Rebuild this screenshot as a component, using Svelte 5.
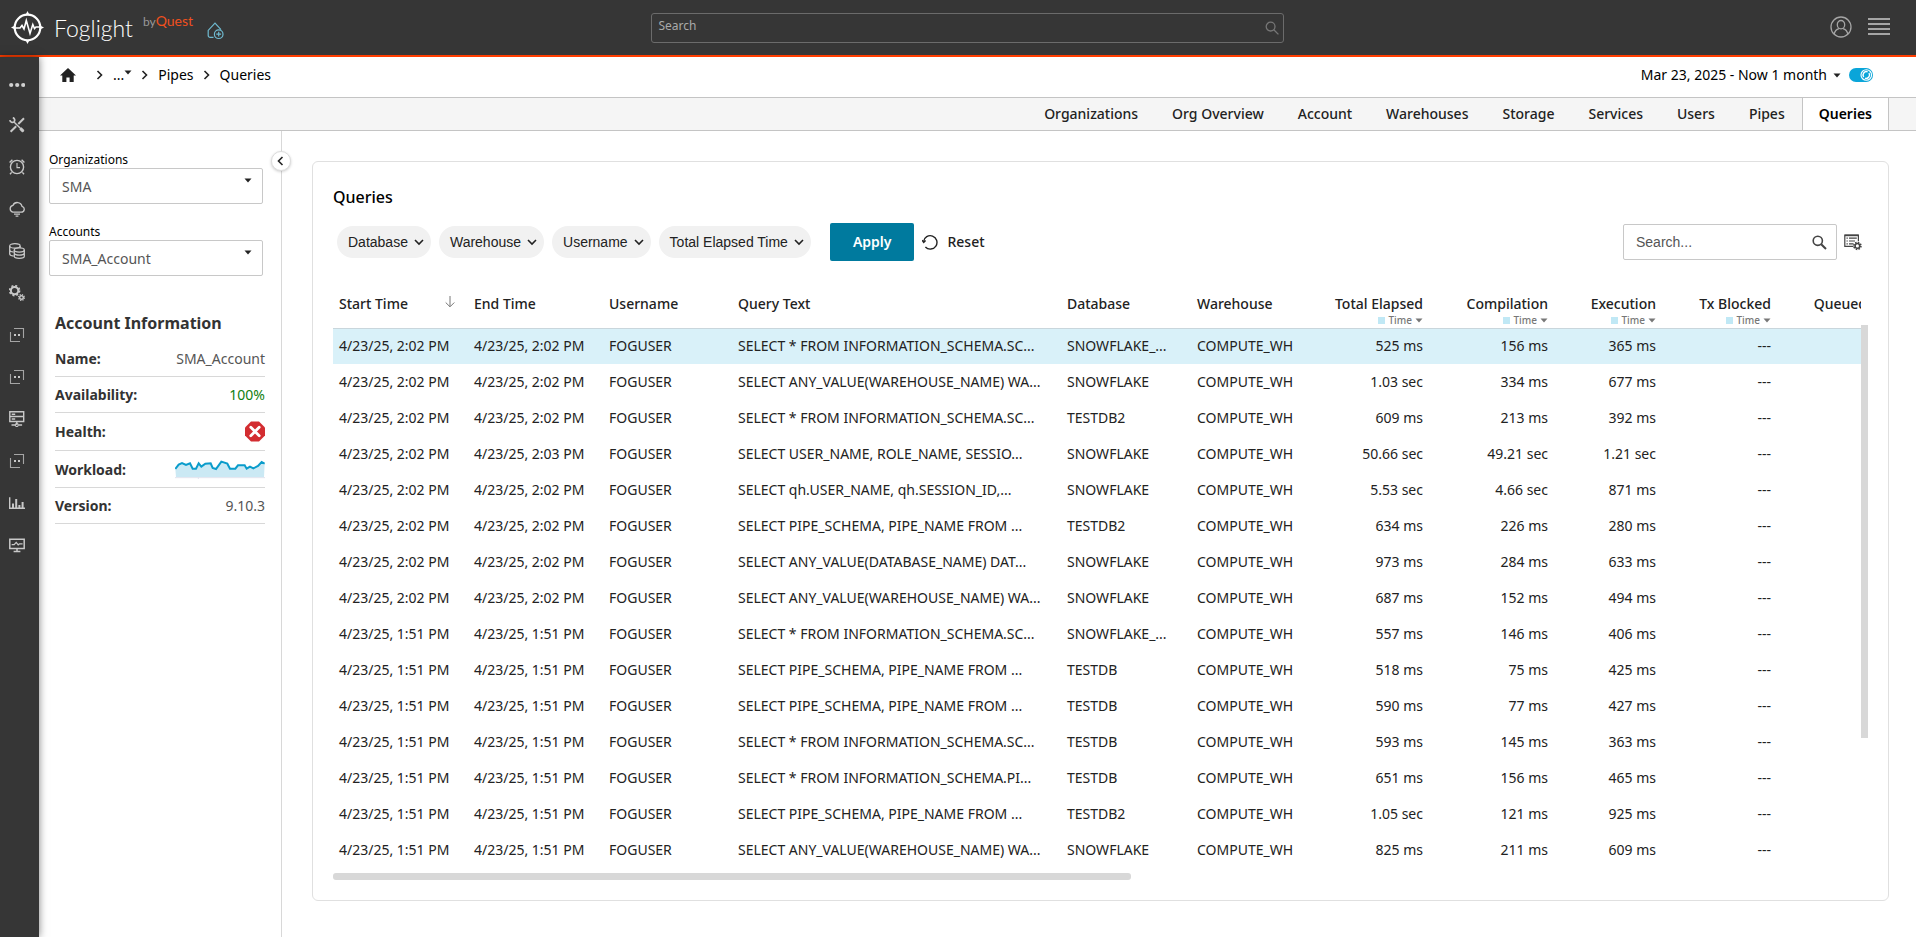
<script>
  const domainIcon = '<path d="M5 1.5h9.5v9.5M1.5 5v9.5H11" stroke="#a5a5a5"/><path d="M5 8h2M9 8h2" stroke-width="2"/>'

  const navItems = [
    { name: 'More', icon: '<g fill="#d0d0d0" stroke="none"><circle cx="2.2" cy="10" r="2.1"/><circle cx="8.2" cy="10" r="2.1"/><circle cx="14.2" cy="10" r="2.1"/></g>' },
    { name: 'Tools', icon: '<path d="M15 1.2L9.3 7M7.2 9.3L1.6 14.8" stroke-width="2"/><path d="M5 5l9.6 9.6" stroke-width="1.4"/><path d="M11.4 11.4l3 3" stroke-width="3"/><path d="M.8 3.2a2.6 2.6 0 0 0 4.4 1.4A2.6 2.6 0 0 0 3.8.6" stroke-width="1.7"/>' },
    { name: 'Alarms', icon: '<circle cx="8" cy="8" r="6.6" stroke-width="1.4"/><path d="M8 4v4.6h3"/><path d="M.6 3.6L3.4.8M15.4 3.6L12.6.8M2.6 13.4L1 15.3M13.4 13.4l1.6 1.9" stroke-width="1.4"/>' },
    { name: 'Cloud', icon: '<path d="M3.8 11.2h8.4a3 3 0 0 0 .8-5.9 4.8 4.8 0 0 0-9.1-.9A3.5 3.5 0 0 0 3.8 11.2z" stroke-width="1.3"/><path d="M5 13.2h6M6.6 15.2h2.8" stroke-width="1.3"/>' },
    { name: 'Databases', icon: '<g stroke-width="1.3"><ellipse cx="5.9" cy="2.9" rx="5.2" ry="2.2"/><path d="M.7 2.9v8.2c0 1 1.6 1.8 4 2.1M11.1 2.9V5M.7 7c0 1 1.6 1.8 4 2.1"/><ellipse cx="10.3" cy="7" rx="5" ry="2.1"/><path d="M5.3 7v6.2c0 2.8 10 2.8 10 0V7M5.3 10.1c0 2.7 10 2.7 10 0"/></g>' },
    { name: 'Administration', icon: '<circle cx="5.6" cy="5.6" r="3.7" stroke-width="2"/><circle cx="5.6" cy="5.6" r="5" stroke-width="1.6" stroke-dasharray="2 1.93"/><circle cx="12.5" cy="12.5" r="1.8" stroke-width="1.4"/><circle cx="12.5" cy="12.5" r="2.9" stroke-width="1.3" stroke-dasharray="1.2 1.08"/>' },
    { name: 'Domain one', icon: domainIcon },
    { name: 'Domain two', icon: domainIcon },
    { name: 'Servers', icon: '<path d="M.8.8h13.9v4.7H.8zM.8 5.5h13.9v5H.8zM7.8 10.5V14M2.5 14h3.6M9.5 14h3.6" stroke-width="1.4"/><path d="M2.7 3.2h3.5M2.7 8h3.5" stroke-width="1.4"/><circle cx="7.8" cy="14" r="1.5"/>' },
    { name: 'Domain three', icon: domainIcon },
    { name: 'Reports', icon: '<path d="M.7 2.2v11.1H16" stroke-width="1.4"/><path d="M4 13V8.4M7.2 13V4M10.4 13V10M13.6 13V7" stroke-width="2"/>' },
    { name: 'Dashboards', icon: '<path d="M.8 2.2h14.4v9.2H.8zM8 11.4v3M4.6 14.4h6.8" stroke-width="1.5"/><path d="M2.6 7.6h2.6l2-2.2 2 2.4 1.4-1h3" stroke-width="1.3"/>' }
  ]

  const tabs = ['Organizations', 'Org Overview', 'Account', 'Warehouses', 'Storage', 'Services', 'Users', 'Pipes', 'Queries']
  const filters = ['Database', 'Warehouse', 'Username', 'Total Elapsed Time']

  const textColumns = ['Start Time', 'End Time', 'Username', 'Query Text', 'Database', 'Warehouse']
  const timeColumns = ['Total Elapsed', 'Compilation', 'Execution', 'Tx Blocked']

  const selectSchema = 'SELECT * FROM INFORMATION_SCHEMA.SC...'
  const selectWarehouse = 'SELECT ANY_VALUE(WAREHOUSE_NAME) WA...'
  const selectPipe = 'SELECT PIPE_SCHEMA, PIPE_NAME FROM ...'

  const rows = [
    ['2:02', '2:02', selectSchema, 'SNOWFLAKE_...', '525 ms', '156 ms', '365 ms'],
    ['2:02', '2:02', selectWarehouse, 'SNOWFLAKE', '1.03 sec', '334 ms', '677 ms'],
    ['2:02', '2:02', selectSchema, 'TESTDB2', '609 ms', '213 ms', '392 ms'],
    ['2:02', '2:03', 'SELECT USER_NAME, ROLE_NAME, SESSIO...', 'SNOWFLAKE', '50.66 sec', '49.21 sec', '1.21 sec'],
    ['2:02', '2:02', 'SELECT qh.USER_NAME, qh.SESSION_ID,...', 'SNOWFLAKE', '5.53 sec', '4.66 sec', '871 ms'],
    ['2:02', '2:02', selectPipe, 'TESTDB2', '634 ms', '226 ms', '280 ms'],
    ['2:02', '2:02', 'SELECT ANY_VALUE(DATABASE_NAME) DAT...', 'SNOWFLAKE', '973 ms', '284 ms', '633 ms'],
    ['2:02', '2:02', selectWarehouse, 'SNOWFLAKE', '687 ms', '152 ms', '494 ms'],
    ['1:51', '1:51', selectSchema, 'SNOWFLAKE_...', '557 ms', '146 ms', '406 ms'],
    ['1:51', '1:51', selectPipe, 'TESTDB', '518 ms', '75 ms', '425 ms'],
    ['1:51', '1:51', selectPipe, 'TESTDB', '590 ms', '77 ms', '427 ms'],
    ['1:51', '1:51', selectSchema, 'TESTDB', '593 ms', '145 ms', '363 ms'],
    ['1:51', '1:51', 'SELECT * FROM INFORMATION_SCHEMA.PI...', 'TESTDB', '651 ms', '156 ms', '465 ms'],
    ['1:51', '1:51', selectPipe, 'TESTDB2', '1.05 sec', '121 ms', '925 ms'],
    ['1:51', '1:51', selectWarehouse, 'SNOWFLAKE', '825 ms', '211 ms', '609 ms']
  ]

  const workload = '1,30 11,17 21,12 33,18 45,13 53,29 63,29 71,13 79,23 91,14 107,13 113,27 123,30 131,19 139,8 157,14 165,29 181,29 189,19 209,19 215,29 225,23 235,28 249,21 260,9 269,14'

  let activeTab = $state('Queries')
  let selectedRow = $state(0)
  let panelOpen = $state(true)
</script>

{#snippet chevron(path)}
  <svg class="chevron" width="10" height="10" viewBox="0 0 10 10"><path d={path} /></svg>
{/snippet}

{#snippet caret()}
  <svg class="caret" width="8" height="5" viewBox="0 0 8 5"><path d="M.5.5h7L4 4.5z" /></svg>
{/snippet}

<div class="app">
  <header>
    <div class="brand">
      <svg width="33" height="33" viewBox="0 0 33 33" fill="none" stroke="#fff">
        <circle cx="16.5" cy="16.5" r="12.8" stroke-width="2.2" />
        <path d="M16.5 0l2 4h-4zM16.5 33l2-4h-4zM0 16.5l4-2v4zM33 16.5l-4-2v4z" fill="#fff" stroke="none" />
        <path d="M4 17h5l2-2.5 2 3.5 2.3-8.5 3.7 13 2.8-9 1.7 4 1.5-1.5h4" stroke-width="1.6" />
      </svg>
      <span class="product">Foglight</span>
      <span class="company"><small>by</small>Quest</span>
      <button class="icon-button" aria-label="Set as home page">
        <svg width="17" height="18" viewBox="0 0 17 18" fill="none" stroke="#6fbad0" stroke-width="1.2">
          <path d="M6.5 15.4H3.2a2 2 0 0 1-2-2V8.4L8 1.2l6 6.4" />
          <circle cx="11.7" cy="12.2" r="4.3" />
          <path d="M11.7 9.8v4.8M9.3 12.2h4.8" />
        </svg>
      </button>
    </div>
    <div class="global-search">
      <input type="text" placeholder="Search" aria-label="Search" />
      <svg width="14" height="14" viewBox="0 0 14 14" fill="none" stroke="#777" stroke-width="1.3">
        <circle cx="5.6" cy="5.6" r="4.4" /><path d="M8.8 8.8l4.6 4.6" />
      </svg>
    </div>
    <div class="account-actions">
      <button class="icon-button" aria-label="User">
        <svg width="22" height="22" viewBox="0 0 22 22" fill="none" stroke="#a5a5a5" stroke-width="1.3">
          <circle cx="11" cy="11" r="10" /><ellipse cx="11" cy="8.7" rx="3.7" ry="4.2" />
          <path d="M4.2 18.2c.6-3.4 2.3-5 4.8-5.6M17.8 18.2c-.6-3.4-2.3-5-4.8-5.6" />
        </svg>
      </button>
      <button class="icon-button" aria-label="Menu">
        <svg width="22" height="18" viewBox="0 0 22 18" fill="#a5a5a5">
          <path d="M0 0h22v2H0zM0 5h22v2H0zM0 10h22v2H0zM0 15h22v2H0z" />
        </svg>
      </button>
    </div>
  </header>

  <div class="body">
    <nav class="side-nav" aria-label="Main">
      {#each navItems as item}
        <button class="nav-item" aria-label={item.name}>
          <svg width="16" height="16" viewBox="0 0 16 16" fill="none" stroke="#c8c8c8" stroke-width="1.1">{@html item.icon}</svg>
        </button>
      {/each}
    </nav>

    <div class="page">
      <div class="crumb-bar">
        <nav class="crumbs" aria-label="Breadcrumb">
          <a class="home" href="#home" aria-label="Home">
            <svg width="16" height="15" viewBox="0 0 16 15" fill="#222">
              <path d="M8 0l8 7.6h-2.3V14H9.6V9.5H6.4V14H2.3V7.6H0z" />
            </svg>
          </a>
          {@render chevron('M2.5 1l4 4-4 4')}
          <button class="more">...{@render caret()}</button>
          {@render chevron('M2.5 1l4 4-4 4')}
          <a href="#pipes">Pipes</a>
          {@render chevron('M2.5 1l4 4-4 4')}
          <a href="#queries">Queries</a>
        </nav>
        <div class="time-range">
          <button>Mar 23, 2025 - Now 1 month {@render caret()}</button>
          <button class="icon-button" role="switch" aria-checked="true" aria-label="Auto refresh">
            <svg width="24" height="14" viewBox="0 0 24 14" fill="none">
              <rect width="24" height="14" rx="7" fill="#0aa5d9" />
              <circle cx="17.3" cy="7" r="5.3" stroke="#fff" stroke-width="1.1" />
              <path d="M18.6 3.8a3.4 3.4 0 0 0-3.9 5.2M16 10.2a3.4 3.4 0 0 0 3.9-5.2" stroke="#fff" stroke-width="1.4" />
            </svg>
          </button>
        </div>
      </div>

      <nav class="tabs" aria-label="Views">
        {#each tabs as tab}
          <button class="tab" class:active={activeTab === tab} onclick={() => (activeTab = tab)}>{tab}</button>
        {/each}
      </nav>

      <div class="content">
        <aside class:closed={!panelOpen}>
          <button class="collapse" aria-label="Toggle panel" onclick={() => (panelOpen = !panelOpen)}>
            {@render chevron('M6.5 1l-4 4 4 4')}
          </button>
          {#if panelOpen}
            <div class="field">
              <label for="organization">Organizations</label>
              <div class="select">
                <select id="organization"><option>SMA</option></select>
                {@render caret()}
              </div>
            </div>
            <div class="field">
              <label for="account">Accounts</label>
              <div class="select">
                <select id="account"><option>SMA_Account</option></select>
                {@render caret()}
              </div>
            </div>

            <section class="info">
              <h2>Account Information</h2>
              <dl>
                <div><dt>Name:</dt><dd>SMA_Account</dd></div>
                <div><dt>Availability:</dt><dd class="good">100%</dd></div>
                <div>
                  <dt>Health:</dt>
                  <dd>
                    <svg width="20" height="21" viewBox="0 0 20 20" role="img" aria-label="Fatal">
                      <path d="M6 0h8l6 6v8l-6 6H6l-6-6V6z" fill="#d32d31" />
                      <path d="M5.8 5.8l8.4 8.4M14.2 5.8l-8.4 8.4" stroke="#fff" stroke-width="2.8" stroke-linecap="round" />
                    </svg>
                  </dd>
                </div>
                <div>
                  <dt>Workload:</dt>
                  <dd>
                    <svg width="90" height="20" viewBox="0 0 270 60" role="img" aria-label="Workload trend">
                      <polygon points="{workload} 267,54 3,54" fill="#cbe9f4" />
                      <path d="M0 56h270M70 54v8" stroke="#dfe3ee" stroke-width="3" />
                      <polyline points={workload} fill="none" stroke="#0a9ccb" stroke-width="6" />
                    </svg>
                  </dd>
                </div>
                <div><dt>Version:</dt><dd>9.10.3</dd></div>
              </dl>
            </section>
          {/if}
        </aside>

        <main>
          <section class="card">
            <h1>Queries</h1>
            <div class="toolbar">
              <div class="filters">
                {#each filters as filter}
                  <button class="pill">{filter}{@render chevron('M1 3l4 4 4-4')}</button>
                {/each}
              </div>
              <button class="apply">Apply</button>
              <button class="reset">
                <svg width="16" height="16" viewBox="0 0 16 16" fill="none" stroke="#222" stroke-width="1.4">
                  <path d="M1.6 7.6A6.7 6.7 0 1 1 3.4 13" /><path d="M0 6.2l1.7 2.2 1.9-1.9" />
                </svg>
                Reset
              </button>
              <div class="table-search">
                <input type="text" placeholder="Search..." aria-label="Search queries" />
                <svg width="15" height="15" viewBox="0 0 15 15" fill="none" stroke="#444" stroke-width="1.6">
                  <circle cx="5.8" cy="5.8" r="4.6" /><path d="M9.2 9.2l4.8 4.8" stroke-width="2" />
                </svg>
              </div>
              <button class="icon-button" aria-label="Customize table">
                <svg width="18" height="17" viewBox="0 0 18 17" fill="none" stroke="#444" stroke-width="1.2">
                  <path d="M9.5 12.4H.8V1.2h13.6v6" /><path d="M.8 1.4h13.6" stroke-width="1.6" />
                  <path d="M2.5 4.2h1.3M5 4.2h7.8M2.5 7h1.3M5 7h6M2.5 9.8h1.3M5 9.8h4.5" />
                  <circle cx="13.4" cy="11.9" r="2.3" stroke-width="1.5" />
                  <circle cx="13.4" cy="11.9" r="3.5" stroke-width="1.6" stroke-dasharray="1.5 1.25" />
                </svg>
              </button>
            </div>

            <div class="grid">
              <div class="viewport">
                <table>
                  <colgroup>
                    <col class="date" /><col class="date" /><col class="user" /><col class="query" />
                    <col class="database" /><col class="warehouse" /><col class="elapsed" /><col class="elapsed" />
                    <col class="execution" /><col class="blocked" /><col class="queued" />
                  </colgroup>
                  <thead>
                    <tr>
                      {#each textColumns as column, i}
                        <th>
                          <div class="heading">
                            {column}
                            {#if i === 0}
                              <svg width="10" height="12" viewBox="0 0 10 12" fill="none" stroke="#777">
                                <path d="M5 0v10.5M.7 6.5L5 10.8l4.3-4.3" />
                              </svg>
                            {/if}
                          </div>
                        </th>
                      {/each}
                      {#each timeColumns as column}
                        <th class="number">
                          {column}
                          <span class="measure"><i></i>Time{@render caret()}</span>
                        </th>
                      {/each}
                      <th class="number">Queued</th>
                    </tr>
                  </thead>
                  <tbody>
                    {#each rows as [start, end, query, database, elapsed, compilation, execution], i}
                      <tr class:selected={selectedRow === i} onclick={() => (selectedRow = i)}>
                        <td>4/23/25, {start} PM</td>
                        <td>4/23/25, {end} PM</td>
                        <td>FOGUSER</td>
                        <td>{query}</td>
                        <td>{database}</td>
                        <td>COMPUTE_WH</td>
                        <td class="number">{elapsed}</td>
                        <td class="number">{compilation}</td>
                        <td class="number">{execution}</td>
                        <td class="number">---</td>
                        <td></td>
                      </tr>
                    {/each}
                  </tbody>
                </table>
              </div>
              <div class="v-track"><div class="v-thumb"></div></div>
            </div>
            <div class="h-thumb"></div>
          </section>
        </main>
      </div>
    </div>
  </div>
</div>

<style>
  :global(body) {
    background: #fff;
    color: #222;
    font: 14px/20px 'Noto Sans', sans-serif;
  }

  .app,
  .app * {
    box-sizing: border-box;
  }

  .app {
    display: flex;
    flex-direction: column;
    min-height: 100vh;
  }

  button {
    background: none;
    border: 0;
    color: inherit;
    cursor: pointer;
    font: inherit;
    padding: 0;
  }

  a {
    color: inherit;
    text-decoration: none;
  }

  svg {
    display: block;
    flex: none;
  }

  .icon-button {
    display: flex;
  }

  .chevron {
    fill: none;
    stroke: #222;
    stroke-width: 1.6;
  }

  .caret {
    fill: #222;
  }

  header {
    align-items: center;
    background: #363636;
    border-bottom: 2px solid #ff3d00;
    display: grid;
    grid-template-columns: 34% 33% 1fr;
    height: 57px;
  }

  .brand {
    align-items: center;
    display: flex;
    padding-left: 11px;
  }

  .product {
    color: #fff;
    font: 300 23px/32px Lato, sans-serif;
    padding-left: 10px;
  }

  .company {
    align-self: flex-start;
    color: #f0501e;
    font: 14px/20px Lato, sans-serif;
    padding: 0 14px 0 10px;
  }

  .company small {
    color: #999;
    font-size: 12px;
  }

  .brand .icon-button {
    padding-top: 6px;
  }

  .global-search {
    align-items: center;
    border: 1px solid #6b6b6b;
    border-radius: 3px;
    display: flex;
    height: 30px;
    padding-right: 4px;
  }

  .global-search input {
    background: none;
    border: 0;
    color: #fff;
    flex: 1;
    font: 12px/20px 'Noto Sans', sans-serif;
    outline: 0;
    padding: 0 6px 4px;
  }

  .global-search input::placeholder {
    color: #aaa;
  }

  .account-actions {
    align-items: center;
    display: flex;
    gap: 16px;
    justify-content: flex-end;
    padding: 0 26px 2px 0;
  }

  .body {
    display: flex;
    flex: 1;
  }

  .side-nav {
    background: #363636;
    box-shadow: 0 0 8px rgba(0, 0, 0, .5);
    flex: none;
    padding-top: 5px;
    width: 39px;
    z-index: 1;
  }

  .nav-item {
    align-items: center;
    display: flex;
    height: 42px;
    padding-left: 9px;
    width: 100%;
  }

  .page {
    display: flex;
    flex: 1;
    flex-direction: column;
    min-width: 0;
  }

  .crumb-bar {
    align-items: center;
    border-bottom: 1px solid #c4c4c4;
    color: #000;
    display: flex;
    height: 41px;
    justify-content: space-between;
    padding: 0 43px 4px 21px;
  }

  .crumbs {
    align-items: center;
    display: flex;
    gap: 8px;
  }

  .home {
    margin-right: 11px;
  }

  .more {
    align-items: center;
    display: flex;
  }

  .more .caret {
    margin-bottom: 6px;
  }

  .time-range,
  .time-range button {
    align-items: center;
    display: flex;
    gap: 6px;
  }

  .time-range {
    gap: 8px;
  }

  .tabs {
    background: #f5f5f5;
    border-bottom: 1px solid #c4c4c4;
    display: flex;
    height: 33px;
    justify-content: flex-end;
    padding-right: 27px;
  }

  .tab {
    border: 1px solid transparent;
    border-width: 0 1px;
    font-weight: 500;
    padding: 0 16px;
  }

  .tab.active {
    background: #fff;
    border-color: #c4c4c4;
    color: #000;
    font-weight: 600;
  }

  .content {
    display: flex;
    flex: 1;
  }

  aside {
    border-right: 1px solid #d8d8d8;
    flex: none;
    padding: 20px 16px 0 10px;
    position: relative;
    width: 243px;
  }

  aside.closed {
    width: 20px;
  }

  .collapse {
    align-items: center;
    background: #fff;
    border: 1px solid #ddd;
    border-radius: 50%;
    box-shadow: 0 1px 3px rgba(0, 0, 0, .2);
    display: flex;
    height: 20px;
    justify-content: center;
    position: absolute;
    right: -10px;
    top: 20px;
    width: 20px;
  }

  .field {
    color: #000;
    margin: 0 2px 19px 0;
  }

  .field label {
    display: block;
    font-size: 12px;
    line-height: 17px;
  }

  .select {
    display: grid;
  }

  .select > :global(*) {
    grid-area: 1 / 1;
  }

  .select select {
    appearance: none;
    background: #fff;
    border: 1px solid #c8c8c8;
    border-radius: 2px;
    color: #555;
    font: inherit;
    height: 36px;
    padding: 2px 12px 0;
    width: 100%;
  }

  .select .caret {
    justify-self: end;
    margin: 10px 11px 0 0;
  }

  .info {
    margin: 35px 0 0 6px;
  }

  h2 {
    color: #333;
    font-size: 16px;
    font-weight: 700;
    line-height: 24px;
    margin: 0 0 6px;
  }

  dl {
    margin: 0;
  }

  dl div {
    align-items: center;
    border-bottom: 1px solid #d8d8d8;
    display: flex;
    justify-content: space-between;
    line-height: 19px;
    padding: 8px 0;
  }

  dt {
    color: #333;
    font-weight: 700;
  }

  dd {
    color: #555;
    margin: 0;
  }

  .good {
    color: #108010;
  }

  main {
    flex: 1;
    min-width: 0;
    padding: 30px 27px 35px 30px;
  }

  .card {
    border: 1px solid #e0e0e0;
    border-radius: 6px;
    padding: 23px 20px 20px;
  }

  h1 {
    color: #000;
    font-size: 16px;
    font-weight: 500;
    line-height: 24px;
    margin: 0 0 14px;
  }

  .toolbar {
    align-items: center;
    display: flex;
    padding-left: 4px;
  }

  .filters {
    display: flex;
    gap: 8px;
  }

  .pill {
    align-items: center;
    background: #f1f1f1;
    border-radius: 16px;
    display: flex;
    font: 14px/20px 'Liberation Sans', Arial, sans-serif;
    gap: 6px;
    height: 32px;
    padding: 0 7px 0 11px;
  }

  .apply {
    background: #007a9e;
    border-radius: 2px;
    color: #fff;
    font-weight: 600;
    height: 38px;
    margin: 0 8px 0 19px;
    padding: 0 23px;
  }

  .reset {
    align-items: center;
    display: flex;
    font-weight: 500;
    gap: 9px;
  }

  .table-search {
    align-items: center;
    border: 1px solid #c8c8c8;
    border-radius: 2px;
    display: flex;
    height: 36px;
    margin: 0 7px 0 auto;
    padding: 0 9px 0 12px;
    width: 214px;
  }

  .table-search input {
    border: 0;
    flex: 1;
    font: 14px/20px 'Liberation Sans', Arial, sans-serif;
    min-width: 0;
    outline: 0;
    padding: 0;
  }

  .table-search input::placeholder {
    color: #555;
  }

  .toolbar > .icon-button {
    margin-right: 6px;
  }

  .grid {
    display: flex;
    margin-top: 11px;
  }

  .viewport {
    flex: 1;
    overflow: hidden;
  }

  table {
    border-collapse: collapse;
    table-layout: fixed;
    width: 1540px;
  }

  .date {
    width: 135px;
  }

  .user {
    width: 129px;
  }

  .query {
    width: 329px;
  }

  .database {
    width: 130px;
  }

  .warehouse {
    width: 113px;
  }

  .elapsed {
    width: 125px;
  }

  .execution {
    width: 108px;
  }

  .blocked {
    width: 115px;
  }

  .queued {
    width: 96px;
  }

  th,
  td {
    padding: 0 6px;
    text-align: left;
    white-space: nowrap;
  }

  th {
    border-bottom: 1px solid #c9d6dc;
    font-weight: 500;
    height: 56px;
    padding-top: 22px;
    vertical-align: top;
  }

  td {
    height: 36px;
  }

  .heading {
    display: flex;
    justify-content: space-between;
    padding-right: 7px;
  }

  .heading svg {
    margin-top: 2px;
  }

  .number {
    text-align: right;
  }

  .measure {
    align-items: center;
    color: #777;
    display: flex;
    font-size: 10px;
    font-weight: 500;
    gap: 3px;
    justify-content: flex-end;
    line-height: 12px;
  }

  .measure i {
    background: #c0e8f5;
    height: 7px;
    width: 7px;
  }

  .measure .caret {
    fill: #777;
  }

  .selected {
    background: #d9f1f9;
  }

  .v-track {
    flex: none;
    padding-top: 53px;
    width: 7px;
  }

  .v-thumb {
    background: #d8d8d8;
    height: 76%;
  }

  .h-thumb {
    background: #d8d8d8;
    border-radius: 3px;
    height: 7px;
    margin-top: 5px;
    width: 52%;
  }
</style>
